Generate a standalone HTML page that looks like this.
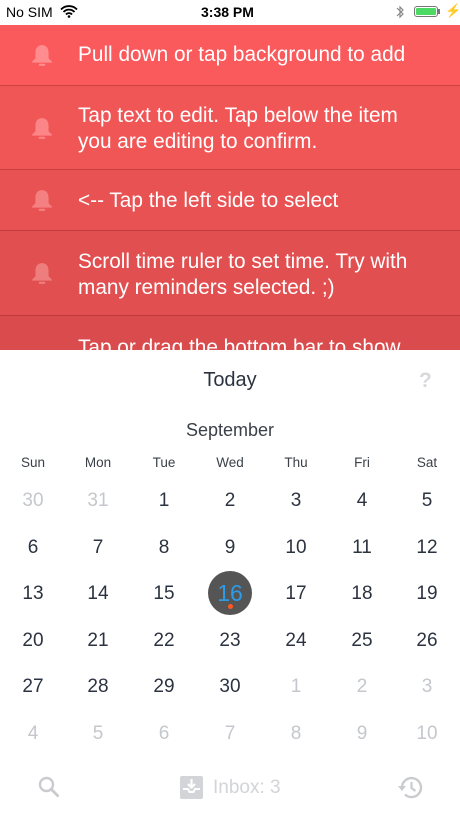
<!DOCTYPE html>
<html><head><meta charset="utf-8"><style>
body{margin:0;width:460px;height:818px;overflow:hidden;background:#fff;font-family:"Liberation Sans",sans-serif;position:relative}
.sb{position:absolute;top:0;left:0;width:460px;height:25px;font-size:14px;color:#000}
.row{position:absolute;left:0;width:460px;color:#fff;font-size:20.8px;line-height:26px;border-bottom:1px solid rgba(120,20,20,.35);box-sizing:border-box}
.row .t{position:absolute;left:78px;top:0}
.bell{position:absolute;left:30px;width:24px;height:24px}
.c{position:absolute;width:40px;margin-left:-20px;text-align:center;color:#2c3340;font-size:19px;z-index:2}
.w{font-size:13.5px;color:#3a3f48}
.g{color:#c4c7cc}
</style></head><body>
<div class="sb">
<span style="position:absolute;left:6px;top:4px">No SIM</span>
<svg style="position:absolute;left:60px;top:5px" width="18" height="13" viewBox="0 0 18 13"><path d="M1 4.5a11 11 0 0 1 16 0M3.5 7a7.5 7.5 0 0 1 11 0M6 9.5a4 4 0 0 1 6 0" stroke="#000" stroke-width="1.8" fill="none"/><circle cx="9" cy="11.5" r="1.3"/></svg>
<span style="position:absolute;left:201px;top:4px;font-weight:bold">3:38 PM</span>
<svg style="position:absolute;left:395px;top:4px" width="10" height="16" viewBox="0 0 10 16"><path d="M2 4l6 6-3 3V3l3 3-6 6" stroke="#888" stroke-width="1.2" fill="none"/></svg>
<div style="position:absolute;left:414px;top:6px;width:24px;height:11px;border:1px solid #777;border-radius:3px;box-sizing:border-box;padding:1px"><div style="background:#4cd964;width:100%;height:100%;border-radius:1px"></div></div>
<div style="position:absolute;left:438px;top:9px;width:2px;height:5px;background:#777"></div>
<span style="position:absolute;left:445px;top:3px;font-size:13px">⚡</span>
</div>

<div class="row" style="top:25px;height:61px;background:#fa5a5c"><svg class="bell" style="top:18px" viewBox="0 0 22 22"><path d="M11 2c-4 0-6 3-6 7v5l-3 3v1h18v-1l-3-3V9c0-4-2-7-6-7z" fill="#ff8d8f"/><rect x="8" y="19" width="6" height="2" rx="1" fill="#ff8d8f"/></svg><span class="t" style="top:17px">Pull down or tap background to add</span></div>
<div class="row" style="top:86px;height:84px;background:#f15657"><svg class="bell" style="top:30px" viewBox="0 0 22 22"><path d="M11 2c-4 0-6 3-6 7v5l-3 3v1h18v-1l-3-3V9c0-4-2-7-6-7z" fill="#fb8587"/><rect x="8" y="19" width="6" height="2" rx="1" fill="#fb8587"/></svg><span class="t" style="top:17px">Tap text to edit. Tap below the item<br>you are editing to confirm.</span></div>
<div class="row" style="top:170px;height:61px;background:#e95253"><svg class="bell" style="top:18px" viewBox="0 0 22 22"><path d="M11 2c-4 0-6 3-6 7v5l-3 3v1h18v-1l-3-3V9c0-4-2-7-6-7z" fill="#f58082"/><rect x="8" y="19" width="6" height="2" rx="1" fill="#f58082"/></svg><span class="t" style="top:18px">&lt;-- Tap the left side to select</span></div>
<div class="row" style="top:231px;height:85px;background:#e14f50"><svg class="bell" style="top:30px" viewBox="0 0 22 22"><path d="M11 2c-4 0-6 3-6 7v5l-3 3v1h18v-1l-3-3V9c0-4-2-7-6-7z" fill="#ee7d7e"/><rect x="8" y="19" width="6" height="2" rx="1" fill="#ee7d7e"/></svg><span class="t" style="top:18px">Scroll time ruler to set time. Try with<br>many reminders selected. ;)</span></div>
<div class="row" style="top:316px;height:34px;background:#d94b4c;overflow:hidden;border:none"><span class="t" style="top:19px">Tap or drag the bottom bar to show</span></div>

<div style="position:absolute;top:369px;left:0;width:460px;text-align:center;font-size:20px;color:#2c3340">Today</div>
<div style="position:absolute;top:369px;left:419px;font-size:21px;font-weight:bold;color:#d8d9dc">?</div>
<div style="position:absolute;top:420px;left:0;width:460px;text-align:center;font-size:18px;color:#3a3f48">September</div>

<div style="position:absolute;left:208px;top:571px;width:44px;height:44px;border-radius:50%;background:#555"></div>
<div style="position:absolute;left:228px;top:604px;width:5px;height:5px;border-radius:50%;background:#ff5a1e;z-index:3"></div>
<div id="cal"></div>
<script>
var xs=[33,98,164,230,296,362,427],ys=[455,490,537,583,630,676,723];
var h='',wd=['Sun','Mon','Tue','Wed','Thu','Fri','Sat'];
wd.forEach(function(d,i){h+='<div class="c w" style="left:'+xs[i]+'px;top:'+ys[0]+'px">'+d+'</div>'});
var days=[30,31];for(var i=1;i<=30;i++)days.push(i);for(i=1;i<=10;i++)days.push(i);
days.forEach(function(d,k){var r=Math.floor(k/7),c=k%7;var g=(k<2||k>=32);var st='left:'+xs[c]+'px;top:'+ys[r+1]+'px';
if(k==17)st+=';color:#2d9be6;font-size:23px;top:'+(ys[r+1]-3)+'px';
h+='<div class="c'+(g?' g':'')+'" style="'+st+'">'+d+'</div>'});
document.getElementById('cal').innerHTML=h;
</script>

<svg style="position:absolute;left:37px;top:775px" width="24" height="24" viewBox="0 0 24 24"><circle cx="9.5" cy="9.5" r="6.5" stroke="#c9cbcf" stroke-width="2.4" fill="none"/><path d="M14.5 14.5l7 7" stroke="#c9cbcf" stroke-width="2.8"/></svg>
<svg style="position:absolute;left:180px;top:776px" width="23" height="23" viewBox="0 0 23 23"><rect width="23" height="23" rx="2" fill="#d2d4d8"/><path d="M3 13h5l1.5 3h4L15 13h5" stroke="#fff" stroke-width="2" fill="none"/><path d="M11.5 3v8M8 8l3.5 3.5L15 8" stroke="#fff" stroke-width="2.2" fill="none"/></svg>
<div style="position:absolute;left:213px;top:777px;font-size:19px;color:#d2d4d8">Inbox: 3</div>
<svg style="position:absolute;left:398px;top:775px" width="27" height="25" viewBox="0 0 27 25"><path d="M4 12.5A9.5 9.5 0 1 1 7 19.5" stroke="#c9cbcf" stroke-width="2.4" fill="none"/><path d="M0 11h8l-4 5z" fill="#c9cbcf"/><path d="M13.5 7v6l4 3" stroke="#c9cbcf" stroke-width="2.2" fill="none"/></svg>
</body></html>
